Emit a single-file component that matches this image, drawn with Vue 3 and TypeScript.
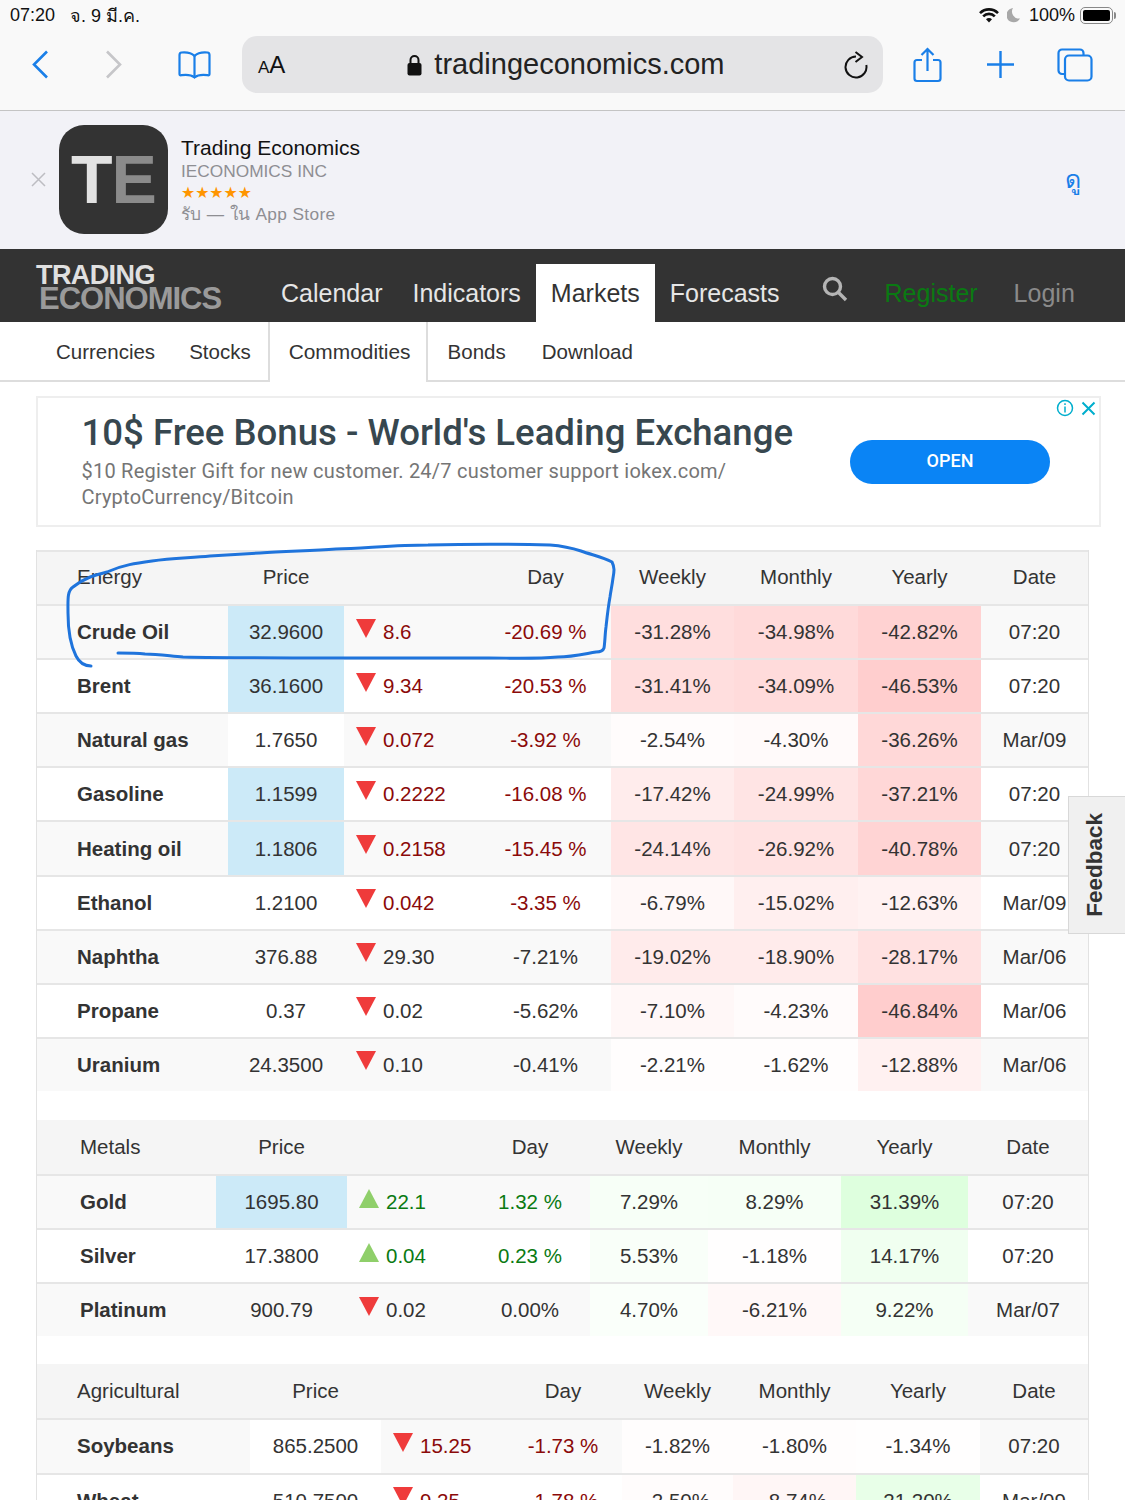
<script setup lang="ts">
interface Row {
  name: string
  price: string
  hot?: boolean
  change: string
  up?: boolean
  day: string
  live?: boolean
  weekly: string
  monthly: string
  yearly: string
  date: string
}

interface Section {
  title: string
  cls: string
  cols: string
  rows: Row[]
}

const sections: Section[] = [
  {
    title: 'Energy',
    cls: 'energy',
    cols: '191px 116px 136px 131px 123px 124px 123px 107px',
    rows: [
      { name: 'Crude Oil', price: '32.9600', hot: true, change: '8.6', day: '-20.69 %', live: true, weekly: '-31.28%', monthly: '-34.98%', yearly: '-42.82%', date: '07:20' },
      { name: 'Brent', price: '36.1600', hot: true, change: '9.34', day: '-20.53 %', live: true, weekly: '-31.41%', monthly: '-34.09%', yearly: '-46.53%', date: '07:20' },
      { name: 'Natural gas', price: '1.7650', change: '0.072', day: '-3.92 %', live: true, weekly: '-2.54%', monthly: '-4.30%', yearly: '-36.26%', date: 'Mar/09' },
      { name: 'Gasoline', price: '1.1599', hot: true, change: '0.2222', day: '-16.08 %', live: true, weekly: '-17.42%', monthly: '-24.99%', yearly: '-37.21%', date: '07:20' },
      { name: 'Heating oil', price: '1.1806', hot: true, change: '0.2158', day: '-15.45 %', live: true, weekly: '-24.14%', monthly: '-26.92%', yearly: '-40.78%', date: '07:20' },
      { name: 'Ethanol', price: '1.2100', change: '0.042', day: '-3.35 %', live: true, weekly: '-6.79%', monthly: '-15.02%', yearly: '-12.63%', date: 'Mar/09' },
      { name: 'Naphtha', price: '376.88', change: '29.30', day: '-7.21%', weekly: '-19.02%', monthly: '-18.90%', yearly: '-28.17%', date: 'Mar/06' },
      { name: 'Propane', price: '0.37', change: '0.02', day: '-5.62%', weekly: '-7.10%', monthly: '-4.23%', yearly: '-46.84%', date: 'Mar/06' },
      { name: 'Uranium', price: '24.3500', change: '0.10', day: '-0.41%', weekly: '-2.21%', monthly: '-1.62%', yearly: '-12.88%', date: 'Mar/06' }
    ]
  },
  {
    title: 'Metals',
    cls: 'metals',
    cols: '179px 131px 123px 120px 118px 133px 127px 120px',
    rows: [
      { name: 'Gold', price: '1695.80', hot: true, change: '22.1', up: true, day: '1.32 %', live: true, weekly: '7.29%', monthly: '8.29%', yearly: '31.39%', date: '07:20' },
      { name: 'Silver', price: '17.3800', change: '0.04', up: true, day: '0.23 %', live: true, weekly: '5.53%', monthly: '-1.18%', yearly: '14.17%', date: '07:20' },
      { name: 'Platinum', price: '900.79', change: '0.02', day: '0.00%', weekly: '4.70%', monthly: '-6.21%', yearly: '9.22%', date: 'Mar/07' }
    ]
  },
  {
    title: 'Agricultural',
    cls: 'agri',
    cols: '213px 131px 123px 118px 111px 123px 124px 108px',
    rows: [
      { name: 'Soybeans', price: '865.2500', change: '15.25', day: '-1.73 %', live: true, weekly: '-1.82%', monthly: '-1.80%', yearly: '-1.34%', date: '07:20' },
      { name: 'Wheat', price: '510.7500', change: '9.25', day: '-1.78 %', live: true, weekly: '-2.50%', monthly: '-8.74%', yearly: '21.20%', date: 'Mar/09' }
    ]
  }
]

// same scale for red and green, the site tints by size of the move
const heat = (v: string) => {
  const n = parseFloat(v)
  const c = Math.round(255 - (Math.abs(n) / 240) * 255)
  return { background: n < 0 ? `rgb(255,${c},${c})` : `rgb(${c},255,${c})` }
}

// only rows updated today get coloured figures
const tone = (r: Row) => {
  if (!r.live) return ''
  return r.up ? 'pos' : 'neg'
}
</script>

<template>
  <div class="page">
    <header class="browser">
      <div class="status">
        <span class="time">07:20</span>
        <span class="date">จ. 9 มี.ค.</span>
        <span class="spacer"></span>
        <svg class="wifi" width="20" height="15" viewBox="0 0 20 15">
          <path d="M1 5.200a12.600 12.600 0 0 1 18 0" fill="none" stroke="#111" stroke-width="2.600" />
          <path d="M4.200 8.400a8 8 0 0 1 11.600 0" fill="none" stroke="#111" stroke-width="2.600" />
          <path d="M10 14.600l-3-3.400a4.200 4.200 0 0 1 6 0z" fill="#111" />
        </svg>
        <svg class="moon" width="14" height="16" viewBox="0 0 14 16">
          <path d="M6 1a7.200 7.200 0 1 0 7 10.500A7 7 0 0 1 6 1z" fill="#a8a8a8" />
        </svg>
        <span class="pct">100%</span>
        <span class="battery"><i></i></span>
      </div>
      <div class="toolbar">
        <svg class="ico back" width="17" height="29" viewBox="0 0 17 29">
          <path d="M15 1.500L2 14.500l13 13" fill="none" stroke="#1a7fe8" stroke-width="2.600" />
        </svg>
        <svg class="ico fwd" width="17" height="29" viewBox="0 0 17 29">
          <path d="M2 1.500l13 13-13 13" fill="none" stroke="#c6c6c9" stroke-width="2.600" />
        </svg>
        <svg class="ico book" width="35" height="30" viewBox="0 0 34 30" fill="none" stroke="#1a7fe8" stroke-width="2.200">
          <path d="M17 6C14 3 9 2 4 2.500 2.500 2.700 2 3.500 2 5v19c0 1 .5 1.500 2 1.200 5-.7 10-.2 13 2.300 3-2.500 8-3 13-2.300 1.500.3 2 -.2 2-1.200V5c0-1.500-.5-2.300-2-2.500C25 2 20 3 17 6z" />
          <path d="M17 6v21" />
        </svg>
        <div class="url">
          <span class="aa"><small>A</small>A</span>
          <span class="addr">
            <svg width="15" height="22" viewBox="0 0 15 22">
              <path d="M3.500 10V6a4 4 0 0 1 8 0v4" fill="none" stroke="#111" stroke-width="2" />
              <rect x="0.500" y="9" width="14" height="12.500" rx="2" fill="#111" />
            </svg>
            tradingeconomics.com
          </span>
          <svg class="reload" width="25" height="28" viewBox="0 0 25 28" fill="none" stroke="#111" stroke-width="2">
            <path d="M13 5.500A10.500 10.500 0 1 0 23.300 14" />
            <path d="M12.500 1l6.500 5-6.500 5" />
          </svg>
        </div>
        <svg class="ico share" width="29" height="36" viewBox="0 0 29 36" fill="none" stroke="#1a7fe8" stroke-width="2.200">
          <path d="M9 13H4a2.500 2.500 0 0 0-2.500 2.500v16A2.500 2.500 0 0 0 4 34h21a2.500 2.500 0 0 0 2.500-2.500v-16A2.500 2.500 0 0 0 25 13h-5" />
          <path d="M14.500 24V2M8.500 8l6-6 6 6" />
        </svg>
        <svg class="ico plus" width="27" height="27" viewBox="0 0 27 27">
          <path d="M13.500 0v27M0 13.500h27" stroke="#1a7fe8" stroke-width="2.400" />
        </svg>
        <svg class="ico tabs" width="36" height="34" viewBox="0 0 36 34" fill="none" stroke="#1a7fe8" stroke-width="2.200">
          <path d="M7 26H5a3.500 3.500 0 0 1-3.500-3.500V5A3.500 3.500 0 0 1 5 1.500h18A3.500 3.500 0 0 1 26.500 5v2" />
          <rect x="8" y="7.500" width="26.500" height="25" rx="4" />
        </svg>
      </div>
    </header>

    <section class="banner">
      <svg class="banner-x" width="15" height="15" viewBox="0 0 15 15">
        <path d="M1 1l13 13M14 1L1 14" stroke="#bdbdc2" stroke-width="1.500" />
      </svg>
      <div class="app-icon"><span class="t">T</span><span class="e">E</span></div>
      <div class="app-info">
        <div class="app-name">Trading Economics</div>
        <div class="app-sub">IECONOMICS INC</div>
        <div class="app-stars">★★★★★</div>
        <div class="app-sub app-get">รับ — ใน App Store</div>
      </div>
      <span class="app-view">ดู</span>
    </section>

    <nav class="nav">
      <div class="logo">
        <span class="logo-a">TRADING</span>
        <span class="logo-b">ECONOMICS</span>
      </div>
      <a class="nav-link">Calendar</a>
      <a class="nav-link">Indicators</a>
      <a class="nav-link active">Markets</a>
      <a class="nav-link">Forecasts</a>
      <svg class="search" width="26" height="26" viewBox="0 0 26 26" fill="none" stroke="#b5b5b5" stroke-width="3.400">
        <circle cx="10.500" cy="10.500" r="8" />
        <path d="M16.500 16.500l7.500 7.500" />
      </svg>
      <a class="nav-link register">Register</a>
      <a class="nav-link login">Login</a>
    </nav>

    <div class="subnav">
      <a class="sub">Currencies</a>
      <a class="sub">Stocks</a>
      <a class="sub current">Commodities</a>
      <a class="sub">Bonds</a>
      <a class="sub">Download</a>
    </div>

    <aside class="ad">
      <div class="ad-text">
        <h2>10$ Free Bonus - World's Leading Exchange</h2>
        <p>$10 Register Gift for new customer. 24/7 customer support iokex.com/<br />CryptoCurrency/Bitcoin</p>
      </div>
      <button class="ad-btn">OPEN</button>
      <div class="ad-corner">
        <svg width="18" height="18" viewBox="0 0 18 18" fill="none" stroke="#00aecd" stroke-width="1.500">
          <circle cx="9" cy="9" r="7.500" />
          <path d="M9 7.500v6M9 4.200v1.800" />
        </svg>
        <svg width="15" height="15" viewBox="0 0 15 15">
          <path d="M1.500 1.500l12 12M13.500 1.500l-12 12" stroke="#00aecd" stroke-width="2" />
        </svg>
      </div>
    </aside>

    <main class="tables">
      <section v-for="s in sections" :key="s.title" class="market" :class="s.cls">
        <div class="row head" :style="{ gridTemplateColumns: s.cols }">
          <div class="name">{{ s.title }}</div>
          <div>Price</div>
          <div></div>
          <div>Day</div>
          <div>Weekly</div>
          <div>Monthly</div>
          <div>Yearly</div>
          <div>Date</div>
        </div>
        <div v-for="r in s.rows" :key="r.name" class="row" :style="{ gridTemplateColumns: s.cols }">
          <div class="name bold">{{ r.name }}</div>
          <div class="price" :class="{ hot: r.hot, plain: r.live && !r.hot }">{{ r.price }}</div>
          <div class="change" :class="tone(r)">
            <i class="tri" :class="r.up ? 'tri-up' : 'tri-down'"></i>{{ r.change }}
          </div>
          <div :class="tone(r)">{{ r.day }}</div>
          <div :style="heat(r.weekly)">{{ r.weekly }}</div>
          <div :style="heat(r.monthly)">{{ r.monthly }}</div>
          <div :style="heat(r.yearly)">{{ r.yearly }}</div>
          <div>{{ r.date }}</div>
        </div>
      </section>
    </main>

    <!-- pen stroke the user drew over the screenshot -->
    <svg class="pen" width="1125" height="700" viewBox="0 0 1125 700">
      <path
        d="M91 666C84 666 79 662 76 656C71 646 68 632 68 613C68 600 67 591 73 587C84 578 95 575 107 572C122 565 137 563 152 561C172 558 190 558 210 556C228 555 244 554 260 553C285 551 310 551 336 549C366 548 398 545 428 545C470 544 510 544 550 545C563 546 572 548 581 551C592 555 603 557 612 562C615 568 614 572 613 578C612 586 611 590 610 597C608 608 607 618 606 627C605 634 605 642 604 648C603 651 600 652 596 652C584 654 572 657 558 657C535 659 512 658 489 658C438 658 387 658 336 658C285 658 234 658 183 657C170 656 158 654 145 654C136 653 127 653 118 653"
        fill="none"
        stroke="#1f74dc"
        stroke-width="3"
        stroke-linecap="round"
      />
    </svg>

    <div class="feedback"><span>Feedback</span></div>
  </div>
</template>

<style scoped>
.page {
  position: relative;
  width: 1125px;
  height: 1500px;
  overflow: hidden;
  background: #fff;
  color: #333;
  font-family: "Liberation Sans", Arial, sans-serif;
}

.browser {
  height: 110px;
  background: #f9f9f9;
  border-bottom: 1px solid #c4c4c4;
}

.status {
  display: flex;
  align-items: center;
  height: 30px;
  padding: 0 9px 0 10px;
  font-size: 18px;
  color: #111;
}

.date {
  margin-left: 15px;
  font-size: 18px;
  font-family: "Liberation Sans", "Noto Sans", "DejaVu Sans", sans-serif;
}

.spacer {
  flex: 1;
}

.moon {
  margin-left: 8px;
}

.pct {
  margin-left: 8px;
}

.battery {
  display: flex;
  position: relative;
  width: 33px;
  height: 17px;
  margin: 0 3px 0 5px;
  padding: 2px;
  border: 1px solid #888;
  border-radius: 5px;
  box-sizing: border-box;
}

.battery::after {
  content: "";
  position: absolute;
  top: 4px;
  right: -4px;
  width: 2px;
  height: 7px;
  background: #888;
  border-radius: 0 2px 2px 0;
}

.battery i {
  flex: 1;
  background: #000;
  border-radius: 2px;
}

.toolbar {
  display: flex;
  align-items: center;
  height: 69px;
  padding: 0 0 0 32px;
}

.fwd {
  margin-left: 56px;
}

.book {
  margin-left: 55px;
}

.url {
  display: flex;
  align-items: center;
  position: relative;
  width: 641px;
  height: 57px;
  margin-left: 30px;
  padding: 0 15px 0 16px;
  box-sizing: border-box;
  background: #e4e4e6;
  border-radius: 15px;
}

.aa {
  font-size: 24px;
  color: #111;
}

.aa small {
  font-size: 17px;
}

.addr {
  display: flex;
  align-items: center;
  gap: 12px;
  margin-left: 122px;
  font-size: 29px;
  color: #222;
}

.reload {
  margin-left: auto;
}

.share {
  margin-left: 30px;
}

.plus {
  margin-left: 45px;
}

.tabs {
  margin-left: 43px;
}

.banner {
  display: flex;
  align-items: center;
  height: 138px;
  padding: 0 44px 2px 31px;
  box-sizing: border-box;
  background: #f2f2f7;
}

.app-icon {
  display: flex;
  align-items: center;
  justify-content: center;
  width: 109px;
  height: 109px;
  margin-left: 13px;
  border-radius: 25px;
  background: #333;
  font-size: 68px;
  font-weight: 700;
  letter-spacing: -1px;
}

.t {
  color: #e2e2e2;
}

.e {
  color: #8b8b8b;
}

.app-info {
  margin: 3px 0 0 13px;
}

.app-name {
  font-size: 21px;
  line-height: 25px;
  color: #111;
}

.app-sub {
  font-size: 17.3px;
  line-height: 23px;
  color: #8e8e93;
  font-family: "Liberation Sans", "Noto Sans", "DejaVu Sans", sans-serif;
}

.app-get {
  letter-spacing: 0.35px;
}

.app-stars {
  font-size: 15.8px;
  line-height: 20px;
  color: #ff9500;
  font-family: "DejaVu Sans", sans-serif;
}

.app-view {
  margin-left: auto;
  font-size: 25px;
  color: #1a7fe8;
  font-family: "Liberation Sans", "Noto Sans", "DejaVu Sans", sans-serif;
}

.nav {
  display: flex;
  align-items: flex-end;
  height: 73px;
  background: #333;
  font-size: 25px;
}

.logo {
  display: flex;
  flex-direction: column;
  align-self: flex-start;
  width: 266px;
  padding: 15px 0 0 36px;
  box-sizing: border-box;
  font-weight: 700;
}

.logo-a {
  font-size: 27px;
  line-height: 22px;
  letter-spacing: -0.6px;
  color: #e0e0e0;
}

.logo-b {
  margin-left: 3px;
  font-size: 31px;
  line-height: 26px;
  letter-spacing: -1px;
  color: #9a9a9a;
}

.nav-link {
  display: flex;
  align-items: center;
  height: 58px;
  padding: 0 15px;
  color: #e6e6e6;
}

.active {
  background: #fff;
  color: #333;
}

.search {
  align-self: flex-start;
  margin: 27px 0 0 27px;
}

.register {
  margin-left: 22px;
  color: #0a7a12;
}

.login {
  margin-left: 6px;
  color: #8a8a8a;
}

.subnav {
  display: flex;
  height: 60px;
  padding-left: 39px;
  box-sizing: border-box;
  border-bottom: 2px solid #ddd;
  font-size: 20.5px;
}

.sub {
  display: flex;
  align-items: center;
  padding: 2px 17px 0;
  color: #333;
}

.current {
  margin-bottom: -2px;
  padding: 0 15px 0 19px;
  background: #fff;
  border-left: 2px solid #ddd;
  border-right: 2px solid #ddd;
  font-size: 20.9px;
}

.current ~ .sub {
  padding: 2px 18px 0;
}

.current + .sub {
  margin-left: 2px;
}

.ad {
  display: flex;
  position: relative;
  width: 1065px;
  height: 131px;
  margin: 14px 0 0 36px;
  box-sizing: border-box;
  border: 2px solid #eee;
  color: #757575;
  font-family: Roboto, sans-serif;
}

.ad-text {
  width: 768.5px;
  margin-left: 43.5px;
}

.ad-text h2 {
  margin: 12px 0 0;
  font-size: 36.6px;
  font-weight: 500;
  line-height: 46px;
  color: #37474f;
}

.ad-text p {
  margin: 2px 0 0;
  font-size: 20px;
  line-height: 26px;
  letter-spacing: 0.23px;
}

.ad-btn {
  width: 200px;
  height: 44px;
  margin: 42px 0 0 0;
  padding: 0 0 4px;
  border: 0;
  border-radius: 22px;
  background: #0a84f5;
  color: #fff;
  font-family: Roboto, sans-serif;
  font-size: 18px;
  font-weight: 500;
}

.ad-corner {
  display: flex;
  align-items: center;
  gap: 7px;
  position: absolute;
  top: 1px;
  right: 3px;
}

.tables {
  width: 1051px;
  height: 977px;
  margin: 23px 0 0 36px;
  border: solid #e2e2e2;
  border-width: 0 1px;
  font-size: 20.5px;
}

.market + .market {
  margin-top: 29px;
}

.market.agri {
  margin-top: 28px;
}

.row {
  display: grid;
  height: 54.1px;
  box-sizing: border-box;
  border-top: 2px solid #e6e6e6;
}

.row > div {
  display: flex;
  align-items: center;
  justify-content: center;
}

.row:nth-child(even) {
  background: #f9f9f9;
}

.row.head {
  border-top: 0;
  background: #f5f5f5;
}

.energy .row.head {
  border-top: 2px solid #e6e6e6;
}

.energy .row.head > div {
  padding-bottom: 2px;
}

.row > .name {
  justify-content: flex-start;
  padding-left: 40px;
}

.metals .row > .name {
  padding-left: 43px;
}

.bold {
  font-weight: 700;
}

.row > .price.plain {
  background: #fff;
}

.row > .price.hot {
  background: #cceaf8;
}

.row > .change {
  justify-content: flex-start;
  padding-left: 12px;
}

.tri {
  width: 0;
  height: 0;
  margin: -8px 7px 0 0;
  border-left: 10.5px solid transparent;
  border-right: 10.5px solid transparent;
}

.tri-down {
  border-top: 19px solid #ef3b3b;
}

.tri-up {
  border-bottom: 19px solid #8fcf6a;
}

.neg {
  color: #8b0a0a;
}

.pos {
  color: #0a7a12;
}

.pen {
  position: absolute;
  top: 0;
  left: 0;
  pointer-events: none;
}

.feedback {
  display: flex;
  align-items: center;
  justify-content: center;
  position: absolute;
  top: 796px;
  right: 0;
  width: 57px;
  height: 138px;
  padding-right: 4px;
  box-sizing: border-box;
  background: #f0f0f0;
  border: 1px solid #d8d8d8;
  border-right: 0;
  font-size: 22.5px;
  font-weight: 700;
  color: #333;
}

.feedback span {
  writing-mode: vertical-rl;
  transform: rotate(180deg);
}
</style>
